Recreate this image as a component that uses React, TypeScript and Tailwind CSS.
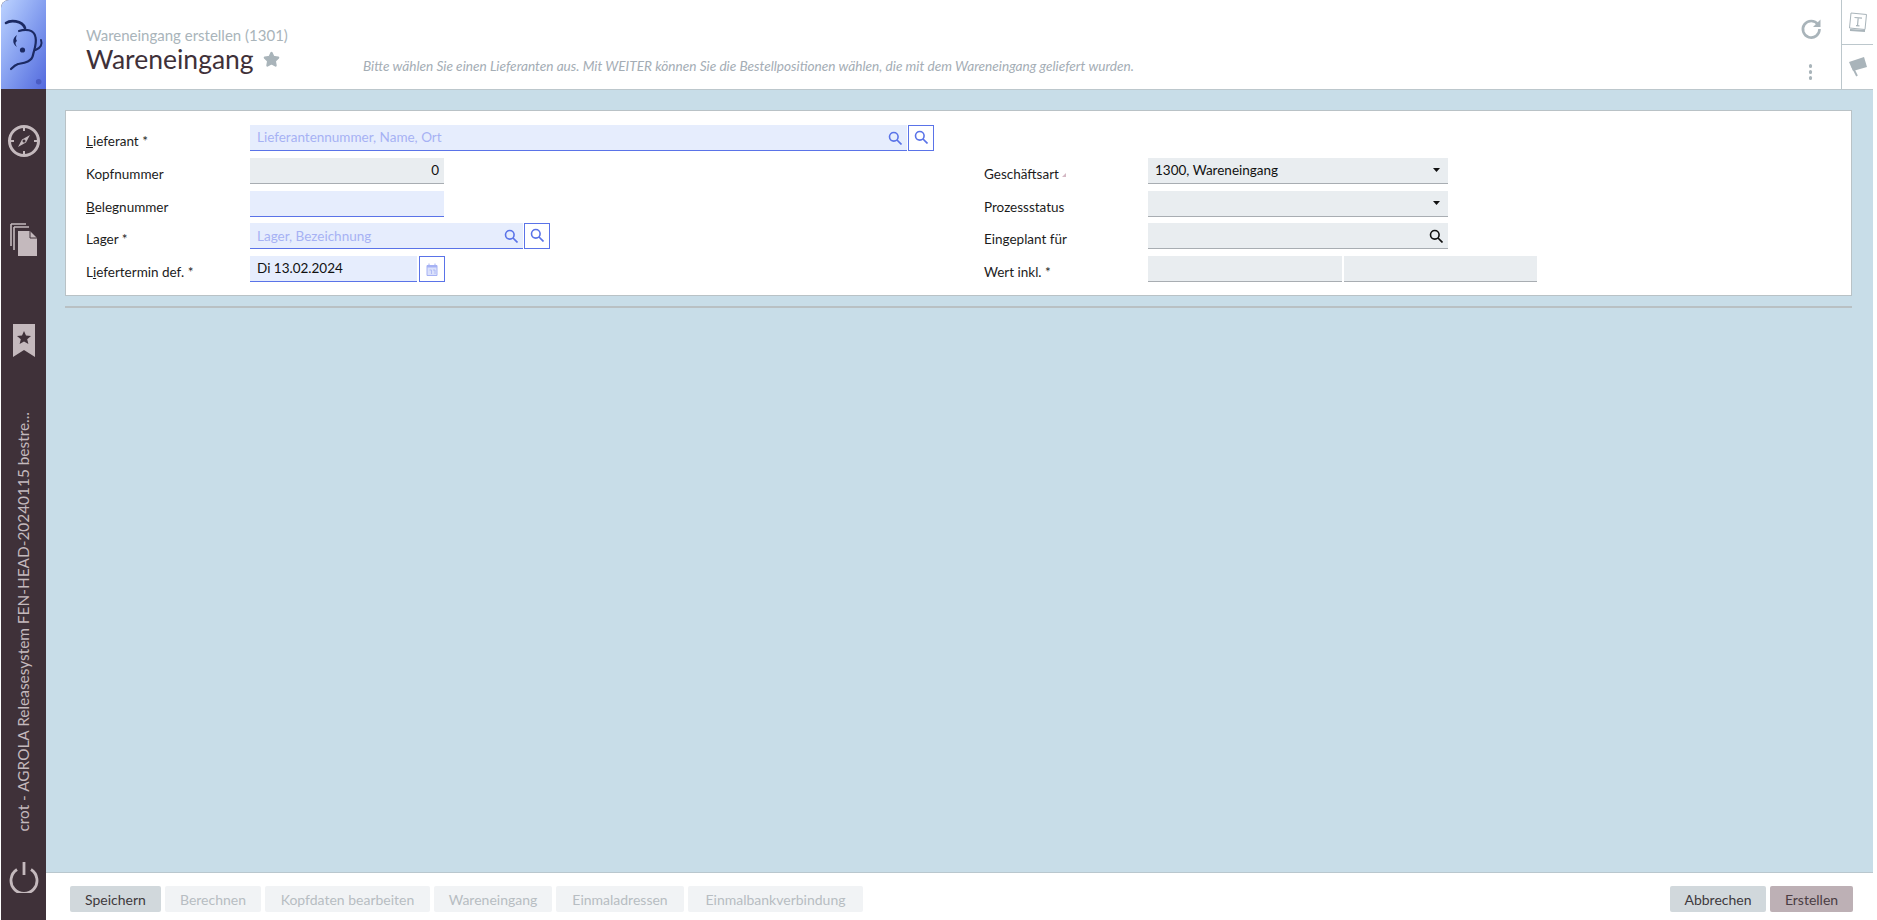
import React from "react";
import { Star } from "lucide-react";

const font = "font-['Lato','Liberation_Sans',sans-serif]";

const Compass = () => (
  <svg width="34" height="34" viewBox="0 0 34 34" fill="none">
    <circle cx="17" cy="17" r="14.500" stroke="#c4b9bd" strokeWidth="3" />
    <path d="M17 2v5M17 27v5M2 17h5M27 17h5" stroke="#c4b9bd" strokeWidth="2" />
    <path d="M23 11l-8 4.500-4 7.500 8-4.500z" fill="#c4b9bd" />
    <circle cx="17" cy="17" r="1.500" fill="#3f3139" />
  </svg>
);

const Docs = () => (
  <svg width="28" height="34" viewBox="0 0 28 34" fill="none">
    <path d="M1 1h15M1 1v22" stroke="#c4b9bd" strokeWidth="1.600" />
    <path d="M4 4h15M4 4v23" stroke="#c4b9bd" strokeWidth="1.600" />
    <path d="M8 8h12l7 7v18H8z" fill="#c4b9bd" />
    <path d="M20 8v7h7" stroke="#3f3139" strokeWidth="1" />
  </svg>
);

const Bookmark = () => (
  <svg width="24" height="34" viewBox="0 0 24 34">
    <path d="M1 0h22v33l-11-7-11 7z" fill="#c4b9bd" />
    <path d="M12 7l2 4.600 5 .4-3.800 3.200 1.200 4.900-4.400-2.600-4.400 2.600 1.200-4.900L5 12l5-.4z" fill="#3f3139" />
  </svg>
);

const Power = () => (
  <svg width="32" height="32" viewBox="0 0 32 32" fill="none">
    <path d="M9 8.500a13 13 0 1 0 14 0" stroke="#c4b9bd" strokeWidth="2.800" />
    <path d="M16 1v13" stroke="#c4b9bd" strokeWidth="2.800" />
  </svg>
);

const Logo = () => (
  <svg width="45" height="89" viewBox="0 0 45 89" fill="none" className="absolute left-0 top-0">
    <path d="M5 23C9 20 21 20 24 28" stroke="#1c2a63" strokeWidth="2.600" strokeLinecap="round" />
    <path d="M18 31C24 29 33 29 34.500 37C36 44 33 50 32 55C31 62 22 63 17 64C14 65 12 67 10 69" stroke="#1c2a63" strokeWidth="2.200" strokeLinecap="round" />
    <path d="M40 40C41.500 44 40 48 34.500 50" stroke="#1c2a63" strokeWidth="2" strokeLinecap="round" />
    <path d="M16 35C11 38 11 44 16 47C14 44 14 42 16 41C14.500 39 15 37 16 35z" fill="#1c2a63" />
    <circle cx="21.500" cy="50" r="2.600" fill="#1c2a63" />
    <circle cx="37.700" cy="81.700" r="2.800" fill="#4a5cc4" />
  </svg>
);

const SearchIcon = ({ color = "#5a73e8" }: { color?: string }) => (
  <svg width="14" height="14" viewBox="0 0 14 14" fill="none">
    <circle cx="5.800" cy="5.800" r="4.300" stroke={color} strokeWidth="1.600" />
    <path d="M9 9l4.500 4.500" stroke={color} strokeWidth="1.700" />
  </svg>
);

const Input = ({ w, tone = "gray", text, placeholder, align, icon }: { w: string; tone?: "gray" | "blue"; text?: string; placeholder?: string; align?: string; icon?: React.ReactNode }) => (
  <div
    className={`${w} h-[26px] flex items-center justify-between pl-[7px] pr-[5px] border-b text-[13.500px] text-[#111] ${
      tone === "blue" ? "bg-[#e6edfd] border-[#5a73e8]" : "bg-[#e9edf0] border-[#a8adb2]"
    } ${align ?? ""}`}
  >
    {placeholder ? <span className="text-[#a6b2f4]">{placeholder}</span> : text ? <span>{text}</span> : <span />}
    {icon}
  </div>
);

const IconButton = ({ children }: { children: React.ReactNode }) => (
  <div className="w-[26px] h-[26px] flex items-center justify-center border border-[#5a73e8] pb-[3px]">{children}</div>
);

const Caret = () => (
  <svg width="7" height="4" viewBox="0 0 7 4" className="mr-[3px]">
    <path d="M0 0h7L3.500 4z" fill="#111" />
  </svg>
);

const Calendar = () => (
  <svg width="12" height="13" viewBox="0 0 12 13" fill="none" className="mt-[3px]">
    <path d="M1 2.500h10v10H1z" fill="#dbe1fb" stroke="#a6b2f4" />
    <path d="M1 2h10v2.500H1z" fill="#a6b2f4" />
    <path d="M3 0.500v2M9 0.500v2" stroke="#a6b2f4" />
    <path d="M3.500 7h2v4M7 7h2v4" stroke="#a6b2f4" strokeWidth="0.800" />
  </svg>
);

const Row = ({ label, children }: { label: React.ReactNode; children: React.ReactNode }) => (
  <div className="flex h-[26px]">
    <div className="w-[164px] pt-[3px] text-[13.500px] text-[#1c1c1c] whitespace-nowrap leading-[26px]">{label}</div>
    <div className="flex gap-[1px]">{children}</div>
  </div>
);

const Btn = ({ w, tone = "off", children }: { w: string; tone?: "off" | "on" | "main"; children: React.ReactNode }) => (
  <div
    className={`${w} h-[26px] flex items-center justify-center rounded-[2px] text-[14px] ${
      tone === "off" ? "bg-[#f1f3f5] text-[#b7bdc2]" : tone === "on" ? "bg-[#d1d8dc] text-[#3f3a3d]" : "bg-[#bdb0b5] text-[#4a3d43]"
    }`}
  >
    {children}
  </div>
);

export default function App() {
  return (
    <div className={`h-[920px] w-[1877px] bg-white pl-[1px] pr-[4px] overflow-hidden ${font}`}>
      <div className="flex h-full overflow-hidden rounded-tl-[8px] rounded-tr-[8px] rounded-br-[8px]">
        {/* sidebar */}
        <aside className="w-[45px] shrink-0 flex flex-col items-center bg-[#3f3139] pb-[27px]">
          <div className="relative w-[45px] h-[89px] bg-gradient-to-br from-[#bdd3ff] to-[#5469dd]">
            <Logo />
          </div>
          <div className="mt-[35px]">
            <Compass />
          </div>
          <div className="mt-[65px]">
            <Docs />
          </div>
          <div className="mt-[67px]">
            <Bookmark />
          </div>
          <div className="flex-1 flex items-end justify-center min-h-0 pb-[29px]">
            <span className="[writing-mode:vertical-rl] rotate-180 text-[15.400px] text-[#c4b9bd] whitespace-nowrap">
              crot - AGROLA Releasesystem FEN-HEAD-20240115 bestre...
            </span>
          </div>
          <Power />
        </aside>

        <div className="flex-1 min-w-0 flex flex-col">
          {/* head */}
          <header className="h-[90px] shrink-0 flex bg-white border-b border-[#bcc7cc]">
            <div className="flex-1 min-w-0 pl-[40px] flex">
              <div className="w-[277px] shrink-0 pt-[25px]">
                <div className="text-[15px] leading-[20px] text-[#a9b4ba] whitespace-nowrap">Wareneingang erstellen (1301)</div>
                <div className="flex items-center gap-[9px] leading-[28px]">
                  <span className="text-[26.500px] text-[#3f3139]">Wareneingang</span>
                  <Star size={17} fill="#a9b4ba" stroke="#a9b4ba" />
                </div>
              </div>
              <div className="flex-1 pt-[56px] text-[13.640px] italic text-[#a4adb5] whitespace-nowrap leading-[20px]">
                Bitte wählen Sie einen Lieferanten aus. Mit WEITER können Sie die Bestellpositionen wählen, die mit dem Wareneingang geliefert wurden.
              </div>
              <div className="w-[60px] flex flex-col items-center pt-[18px] pr-[1px]">
                <svg width="22" height="22" viewBox="0 0 22 22" fill="none">
                  <path d="M18 6.500A8.300 8.300 0 1 0 19.500 11" stroke="#a9b4ba" strokeWidth="2.600" />
                  <path d="M20.500 1.500v7.500H13z" fill="#a9b4ba" />
                </svg>
                <div className="mt-[24px] flex flex-col gap-[2.500px]">
                  <span className="w-[3.500px] h-[3.500px] rounded-full bg-[#a9b4ba]" />
                  <span className="w-[3.500px] h-[3.500px] rounded-full bg-[#a9b4ba]" />
                  <span className="w-[3.500px] h-[3.500px] rounded-full bg-[#a9b4ba]" />
                </div>
              </div>
            </div>
            <div className="w-[32px] shrink-0 border-l border-[#bcc7cc] flex flex-col">
              <div className="h-[45px] border-b border-[#bcc7cc] flex items-center justify-center">
                <svg width="20" height="20" viewBox="0 0 20 20" fill="none">
                  <path d="M3 1l15.500 1.500-1.500 15-15.500-1.500z" fill="#fff" stroke="#a9b4ba" />
                  <path d="M2 18l15 1" stroke="#a9b4ba" strokeWidth="2" />
                  <path d="M6.500 5.500l7.500.7M10.200 5.800l-.7 8M8 13.600l3.500.3" stroke="#a9b4ba" strokeWidth="1.200" />
                </svg>
              </div>
              <div className="flex-1 flex items-center justify-center">
                <svg width="20" height="20" viewBox="0 0 20 20">
                  <path d="M1 5L16 0l3 10-14 4z" fill="#a9b4ba" />
                  <path d="M4 9l5 10" stroke="#a9b4ba" strokeWidth="1.800" />
                </svg>
              </div>
            </div>
          </header>

          {/* content */}
          <main className="flex-1 min-h-0 bg-[#c8dde8] pl-[19px] pr-[21px] pt-[20px]">
            <section className="h-[186px] bg-white border border-[#b9c2c6] pl-[20px] pt-[14px] flex">
              <div className="w-[898px] shrink-0 flex flex-col gap-[6.750px]">
                <Row label={<><u>L</u>ieferant *</>}>
                  <Input w="w-[657px]" tone="blue" placeholder="Lieferantennummer, Name, Ort" icon={<SearchIcon />} />
                  <IconButton><SearchIcon /></IconButton>
                </Row>
                <Row label="Kopfnummer">
                  <Input w="w-[194px]" text="0" align="!justify-end" />
                </Row>
                <Row label={<><u>B</u>elegnummer</>}>
                  <Input w="w-[194px]" tone="blue" />
                </Row>
                <Row label="Lager *">
                  <Input w="w-[273px]" tone="blue" placeholder="Lager, Bezeichnung" icon={<SearchIcon />} />
                  <IconButton><SearchIcon /></IconButton>
                </Row>
                <Row label={<>L<u>i</u>efertermin def. *</>}>
                  <div className="flex gap-[2px]">
                    <Input w="w-[167px]" tone="blue" text="Di 13.02.2024" />
                    <IconButton>
                      <Calendar />
                    </IconButton>
                  </div>
                </Row>
              </div>
              <div className="flex-1 min-w-0 pt-[32.750px] flex flex-col gap-[6.750px]">
                <Row label={<span className="relative">Geschäftsart<span className="absolute left-[78px] top-[7px] w-0 h-0 border-l-[4px] border-b-[4px] border-l-transparent border-b-[#d4b8c4]" /></span>}>
                  <Input w="w-[300px]" text="1300, Wareneingang" icon={<Caret />} />
                </Row>
                <Row label="Prozessstatus">
                  <Input w="w-[300px]" icon={<Caret />} />
                </Row>
                <Row label="Eingeplant für">
                  <Input w="w-[300px]" icon={<SearchIcon color="#111" />} />
                </Row>
                <Row label="Wert inkl. *">
                  <div className="flex gap-[2px]">
                    <Input w="w-[194px]" />
                    <Input w="w-[193px]" />
                  </div>
                </Row>
              </div>
            </section>
            <div className="mt-[10px] h-[2px] bg-[#b9c0c3]" />
          </main>

          {/* footer */}
          <footer className="h-[48px] shrink-0 bg-white border-t border-[#b9c7ce] pl-[24px] pr-[20px] pt-[13px] flex justify-between">
            <div className="flex gap-[4px]">
              <Btn w="w-[91px]" tone="on">Speichern</Btn>
              <Btn w="w-[96px]">Berechnen</Btn>
              <Btn w="w-[165px]">Kopfdaten bearbeiten</Btn>
              <Btn w="w-[118px]">Wareneingang</Btn>
              <Btn w="w-[128px]">Einmaladressen</Btn>
              <Btn w="w-[175px]">Einmalbankverbindung</Btn>
            </div>
            <div className="flex gap-[4px]">
              <Btn w="w-[96px]" tone="on">Abbrechen</Btn>
              <Btn w="w-[83px]" tone="main">Erstellen</Btn>
            </div>
          </footer>
        </div>
      </div>
    </div>
  );
}
